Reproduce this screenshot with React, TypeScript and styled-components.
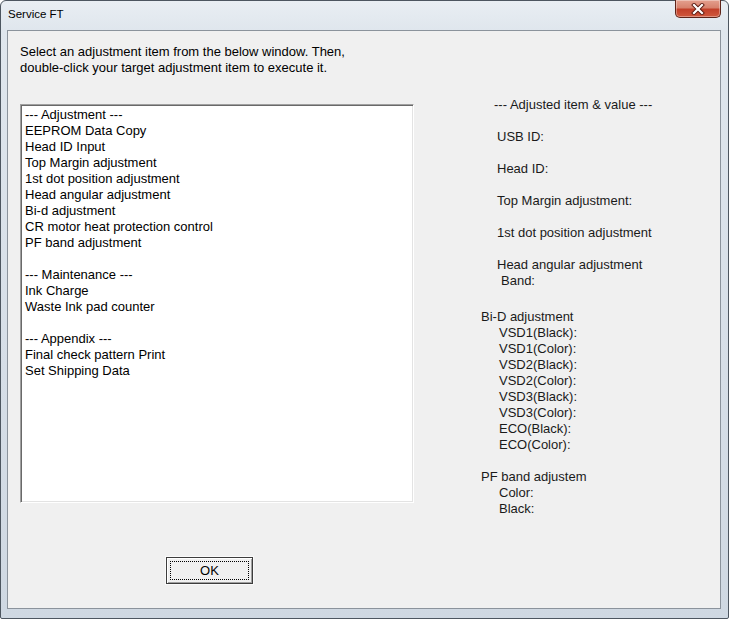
import React from 'react';
import styled, { createGlobalStyle } from 'styled-components';

const GlobalStyle = createGlobalStyle`
  html, body {
    margin: 0;
    padding: 0;
    background: #ffffff;
  }
  body {
    font-family: "Liberation Sans", Arial, sans-serif;
    font-size: 13px;
    color: #000;
  }
`;

const Window = styled.div`
  box-sizing: border-box;
  width: 729px;
  height: 619px;
  border: 1px solid #4d5660;
  border-radius: 6px 6px 2px 2px;
  padding: 0 7px 9px 6px;
  display: flex;
  flex-direction: column;
  background: linear-gradient(
    180deg,
    #e9eef3 0%,
    #dfe6ed 30px,
    #d6dee7 60%,
    #cfd8e2 100%
  );
`;

const TitleBar = styled.div`
  height: 29px;
  display: flex;
  align-items: flex-start;
  justify-content: space-between;
`;

const Title = styled.div`
  font-size: 11.5px;
  padding: 7px 0 0 1px;
  color: #000;
`;

const CloseButton = styled.div`
  width: 46px;
  height: 18px;
  margin-top: -1px;
  box-sizing: border-box;
  border: 1px solid #5e2419;
  border-top: none;
  border-radius: 0 0 5px 5px;
  background: linear-gradient(180deg, #e4a08f 0%, #d7826d 45%, #c2402a 55%, #d0583c 100%);
  display: flex;
  align-items: center;
  justify-content: center;
  box-shadow: inset 0 0 0 1px rgba(255, 255, 255, 0.35);
`;

const Client = styled.div`
  flex: 1;
  border: 1px solid #8b939c;
  background: #f0f0f0;
  padding: 13px 0 0 12px;
  display: flex;
`;

const LeftColumn = styled.div`
  width: 394px;
  display: flex;
  flex-direction: column;
`;

const Instructions = styled.div`
  line-height: 16px;
  white-space: nowrap;
`;

const ListBox = styled.div`
  box-sizing: border-box;
  margin-top: 28px;
  height: 399px;
  background: #fff;
  border-top: 1px solid #a0a0a0;
  border-left: 1px solid #a0a0a0;
  border-right: 1px solid #ffffff;
  border-bottom: 1px solid #ffffff;
  box-shadow: inset 1px 1px 0 #696969, inset -1px -1px 0 #e3e3e3;
  padding: 2px 0 0 4px;
`;

const ListItem = styled.div`
  line-height: 16px;
  height: 16px;
  white-space: nowrap;
`;

const ButtonRow = styled.div`
  margin-top: 54px;
  padding-left: 146px;
`;

const DefaultButton = styled.button`
  box-sizing: border-box;
  width: 87px;
  height: 27px;
  padding: 0;
  border: 1px solid #3c3c3c;
  background: #f0f0f0;
  box-shadow: inset 1px 1px 0 #ffffff, inset -1px -1px 0 #a0a0a0, 0 0 0 1px #fafafa;
  font-family: "Liberation Sans", Arial, sans-serif;
  font-size: 13px;
  color: #000;
  display: flex;
  align-items: stretch;
  justify-content: stretch;
`;

const FocusRect = styled.span`
  flex: 1;
  margin: 3px;
  border: 1px dotted #000;
  display: flex;
  align-items: center;
  justify-content: center;
`;

const RightColumn = styled.div`
  margin-left: 67px;
  padding-top: 53px;
  display: flex;
  flex-direction: column;
  color: #1a1a1a;
`;

const ValueLabel = styled.div<{ $indent: number; $gap: number }>`
  line-height: 16px;
  height: 16px;
  white-space: nowrap;
  margin-top: ${(p) => p.$gap}px;
  padding-left: ${(p) => p.$indent}px;
`;

const listItems = [
  '--- Adjustment ---',
  'EEPROM Data Copy',
  'Head ID Input',
  'Top Margin adjustment',
  '1st dot position adjustment',
  'Head angular adjustment',
  'Bi-d adjustment',
  'CR motor heat protection control',
  'PF band adjustment',
  '',
  '--- Maintenance ---',
  'Ink Charge',
  'Waste Ink pad counter',
  '',
  '--- Appendix ---',
  'Final check pattern Print',
  'Set Shipping Data',
];

const values: { text: string; indent: number; gap: number }[] = [
  { text: '--- Adjusted item & value ---', indent: 13, gap: 0 },
  { text: 'USB ID:', indent: 16, gap: 16 },
  { text: 'Head ID:', indent: 16, gap: 16 },
  { text: 'Top Margin adjustment:', indent: 16, gap: 16 },
  { text: '1st dot position adjustment', indent: 16, gap: 16 },
  { text: 'Head angular adjustment', indent: 16, gap: 16 },
  { text: 'Band:', indent: 20, gap: 0 },
  { text: 'Bi-D adjustment', indent: 0, gap: 20 },
  { text: 'VSD1(Black):', indent: 18, gap: 0 },
  { text: 'VSD1(Color):', indent: 18, gap: 0 },
  { text: 'VSD2(Black):', indent: 18, gap: 0 },
  { text: 'VSD2(Color):', indent: 18, gap: 0 },
  { text: 'VSD3(Black):', indent: 18, gap: 0 },
  { text: 'VSD3(Color):', indent: 18, gap: 0 },
  { text: 'ECO(Black):', indent: 18, gap: 0 },
  { text: 'ECO(Color):', indent: 18, gap: 0 },
  { text: 'PF band adjustem', indent: 0, gap: 16 },
  { text: 'Color:', indent: 18, gap: 0 },
  { text: 'Black:', indent: 18, gap: 0 },
];

const CloseIcon: React.FC = () => (
  <svg width="14" height="12" viewBox="0 0 14 12">
    <path
      d="M3 2 L11 10 M11 2 L3 10"
      stroke="#5a1a10"
      strokeWidth="4"
      strokeLinecap="square"
    />
    <path
      d="M3 2 L11 10 M11 2 L3 10"
      stroke="#ffffff"
      strokeWidth="2.2"
      strokeLinecap="square"
    />
  </svg>
);

const App: React.FC = () => {
  return (
    <>
      <GlobalStyle />
      <Window>
        <TitleBar>
          <Title>Service FT</Title>
          <CloseButton>
            <CloseIcon />
          </CloseButton>
        </TitleBar>

        <Client>
          <LeftColumn>
            <Instructions>
              Select an adjustment item from the below window. Then,
              <br />
              double-click your target adjustment item to execute it.
            </Instructions>

            <ListBox>
              {listItems.map((item, idx) => (
                <ListItem key={idx}>{item}</ListItem>
              ))}
            </ListBox>

            <ButtonRow>
              <DefaultButton>
                <FocusRect>OK</FocusRect>
              </DefaultButton>
            </ButtonRow>
          </LeftColumn>

          <RightColumn>
            {values.map((v, idx) => (
              <ValueLabel key={idx} $indent={v.indent} $gap={v.gap}>
                {v.text}
              </ValueLabel>
            ))}
          </RightColumn>
        </Client>
      </Window>
    </>
  );
};

export default App;
